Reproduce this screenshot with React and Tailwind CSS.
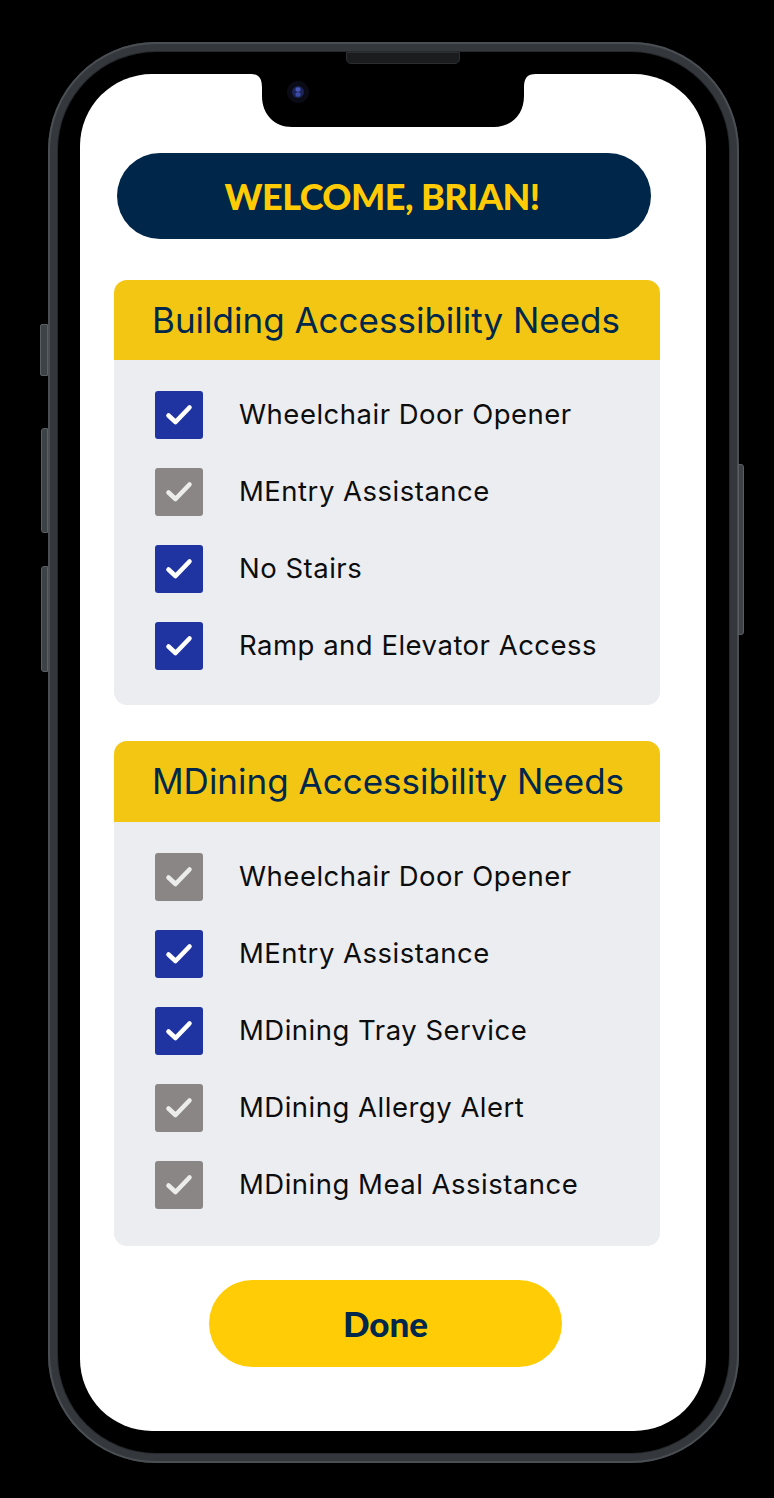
import React from 'react';

const building = [
  { label: 'Wheelchair Door Opener', on: true },
  { label: 'MEntry Assistance', on: false },
  { label: 'No Stairs', on: true },
  { label: 'Ramp and Elevator Access', on: true },
];

const dining = [
  { label: 'Wheelchair Door Opener', on: false },
  { label: 'MEntry Assistance', on: true },
  { label: 'MDining Tray Service', on: true },
  { label: 'MDining Allergy Alert', on: false },
  { label: 'MDining Meal Assistance', on: false },
];

function CheckBox({ on }) {
  return (
    <div
      className={
        'w-[48px] h-[48px] rounded-[3px] shrink-0 flex items-center justify-center ' +
        (on ? 'bg-[#1f33a1]' : 'bg-[#8a8685]')
      }
    >
      <svg width="48" height="48" viewBox="0 0 48 48">
        <path
          d="M13.5 24.5 L20.5 31 L34.5 16.5"
          fill="none"
          stroke={on ? '#ffffff' : '#ececec'}
          strokeWidth="4.6"
          strokeLinecap="round"
          strokeLinejoin="round"
        />
      </svg>
    </div>
  );
}

function Section({ title, items, tall }) {
  return (
    <div className="w-[546px] rounded-[13px] overflow-hidden">
      <div className={(tall ? 'h-[81px]' : 'h-[80px]') + ' bg-[#f3c614] flex items-center pl-[38px]'}>
        <span className="text-[#00274c] text-[35px] leading-none">{title}</span>
      </div>
      <div
        className={
          'bg-[#ecedf1] pl-[41px] pt-[31px] flex flex-col gap-[29px] ' + (tall ? 'pb-[37px]' : 'pb-[35px]')
        }
      >
        {items.map((item) => (
          <div key={item.label} className="flex items-center gap-[36px]">
            <CheckBox on={item.on} />
            <span className="text-[27.5px] leading-none text-[#0d0d0d] tracking-[0.5px]">{item.label}</span>
          </div>
        ))}
      </div>
    </div>
  );
}

function Notch() {
  return (
    <svg className="absolute left-[170px] top-0" width="286" height="54" viewBox="0 0 286 54">
      <path
        d="M0 0 H286 C277 0 274 4 274 14 V22 C274 40 262 53 244 53 H42 C24 53 12 40 12 22 V14 C12 4 9 0 0 0 Z"
        fill="#000"
      />
      <circle cx="48" cy="18" r="11" fill="#0b0b16" />
      <circle cx="48" cy="18" r="6" fill="#1b2455" />
      <ellipse cx="48" cy="15.5" rx="2.6" ry="2.2" fill="#4657b8" />
      <ellipse cx="48" cy="20.5" rx="2.6" ry="2.2" fill="#3a4aa6" />
    </svg>
  );
}

export default function App() {
  return (
    <div className="w-[774px] h-[1498px] bg-black overflow-hidden" style={{ fontFamily: 'Inter, "Noto Sans", sans-serif' }}>
      <div className="relative ml-[48px] mt-[42px] w-[691px] h-[1421px]">
        {/* side buttons */}
        <div className="absolute left-[-8px] top-[282px] w-[8px] h-[52px] rounded-l-[2px] bg-[#3d4246] border border-[#5a5f63]" />
        <div className="absolute left-[-7px] top-[386px] w-[7px] h-[105px] rounded-l-[3px] bg-[#3d4246] border border-[#5a5f63]" />
        <div className="absolute left-[-7px] top-[524px] w-[7px] h-[106px] rounded-l-[3px] bg-[#3d4246] border border-[#5a5f63]" />
        <div className="absolute right-[-5px] top-[422px] w-[6px] h-[171px] rounded-r-[3px] bg-[#3d4246] border border-[#5a5f63]" />

        <div className="w-full h-full rounded-[108px] bg-[#34383c] p-[10px] shadow-[inset_0_0_0_2px_#4a4f54]">
          <div className="relative w-full h-full rounded-[98px] bg-black p-[22px] shadow-[0_0_0_1px_#26292c]">
            {/* speaker */}
            <div className="absolute left-[288px] top-[0px] w-[114px] h-[12px] rounded-b-[5px] bg-[#1a1c1e] border border-[#2c2f32]" />
            <div className="relative w-[626px] h-[1357px] rounded-[72px] bg-white overflow-hidden">
              <Notch />
              <div className="flex flex-col pt-[79px] pl-[34px]">
                <div className="ml-[3px] w-[534px] h-[86px] rounded-[43px] bg-[#00264a] flex items-center justify-center">
                  <span
                    className="text-[#ffcb05] text-[36px] leading-none font-black tracking-[-0.5px] pr-[4px]"
                    style={{ fontFamily: 'Lato, "Liberation Sans", sans-serif' }}
                  >
                    WELCOME, BRIAN!
                  </span>
                </div>
                <div className="mt-[41px]">
                  <Section title="Building Accessibility Needs" items={building} />
                </div>
                <div className="mt-[36px]">
                  <Section title="MDining Accessibility Needs" items={dining} tall />
                </div>
                <div className="mt-[34px] ml-[95px] w-[353px] h-[87px] rounded-[44px] bg-[#ffcc05] flex items-center justify-center">
                  <span
                    className="text-[#00274c] text-[35px] leading-none font-black"
                    style={{ fontFamily: 'Lato, "Liberation Sans", sans-serif' }}
                  >
                    Done
                  </span>
                </div>
              </div>
            </div>
          </div>
        </div>
      </div>
    </div>
  );
}
